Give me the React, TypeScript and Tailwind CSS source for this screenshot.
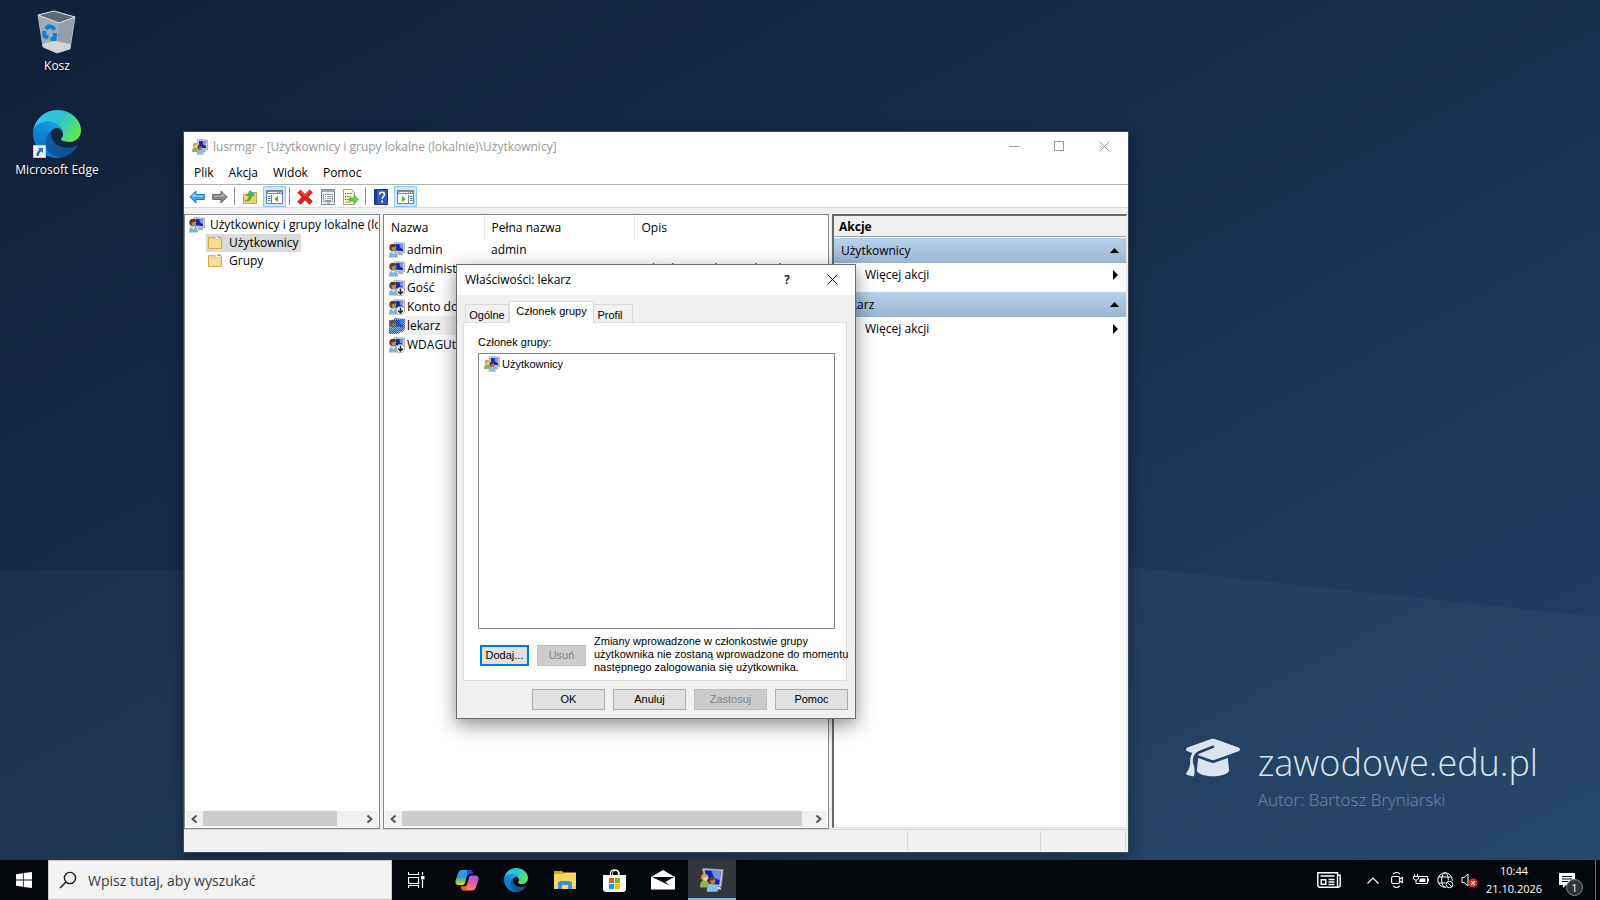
import { useState } from "react";
import type { ReactNode } from "react";
import clsx from "clsx";
import { FaGraduationCap } from "react-icons/fa6";

/* ---------- icons ---------- */

function EdgeIcon({ id, className }: { id: string; className: string }) {
  return (
    <svg viewBox="0 0 256 256" className={className} aria-hidden="true">
      <defs>
        <linearGradient id={`${id}-a`} x1="0.2" y1="0.5" x2="1" y2="0.5">
          <stop offset="0" stopColor="#0c59a4" />
          <stop offset="1" stopColor="#114a8b" />
        </linearGradient>
        <linearGradient id={`${id}-b`} x1="0.7" y1="0.1" x2="0.3" y2="1">
          <stop offset="0" stopColor="#1b9de2" />
          <stop offset="0.6" stopColor="#0a7cd6" />
          <stop offset="1" stopColor="#0078d4" />
        </linearGradient>
        <linearGradient id={`${id}-c`} x1="0" y1="0.3" x2="1" y2="0.7">
          <stop offset="0" stopColor="#35c1f1" />
          <stop offset="0.5" stopColor="#2cc4cf" />
          <stop offset="0.8" stopColor="#4fdc7c" />
          <stop offset="1" stopColor="#66eb3e" />
        </linearGradient>
      </defs>
      <g transform="translate(-4.63 -4.92)">
        <path
          fill={`url(#${id}-a)`}
          d="M235.68 195.46a93.73 93.73 0 0 1-10.54 4.71 101.87 101.87 0 0 1-35.9 6.46c-47.32 0-88.54-32.55-88.54-74.32A31.48 31.48 0 0 1 117.13 105c-42.8 1.8-53.8 46.4-53.8 72.53 0 73.88 68.09 81.37 82.76 81.37 7.91 0 19.84-2.3 27-4.56l1.31-.44a128.34 128.34 0 0 0 66.6-52.8 4 4 0 0 0-5.32-5.64Z"
        />
        <path
          fill={`url(#${id}-b)`}
          d="M110.34 246.34A79.2 79.2 0 0 1 87.6 225a80.72 80.72 0 0 1 29.53-120c3.12-1.47 8.45-4.13 15.54-4a32.35 32.35 0 0 1 25.69 13 31.88 31.88 0 0 1 6.36 18.66c0-.21 24.46-79.6-80-79.6-43.9 0-80 41.66-80 78.21a130.15 130.15 0 0 0 12.11 56 128 128 0 0 0 156.38 67.11 75.55 75.55 0 0 1-62.78-8Z"
        />
        <path
          fill={`url(#${id}-c)`}
          d="M156.94 153.78c-.81 1.05-3.3 2.5-3.3 5.66 0 2.61 1.7 5.12 4.72 7.23 14.38 10 41.49 8.68 41.56 8.68a59.56 59.56 0 0 0 30.27-8.35 61.38 61.38 0 0 0 30.43-52.87c.26-22.41-8-37.31-11.34-43.91C228.09 28.76 182.35 4.92 132.61 4.92a128 128 0 0 0-128 126.2c.48-36.54 36.8-66.05 80-66.05 3.5 0 23.46.34 42 10.07 16.34 8.58 24.9 18.94 30.85 29.21 6.18 10.67 7.28 24.15 7.28 29.52s-2.69 13.33-7.8 19.91Z"
        />
      </g>
    </svg>
  );
}

function BinIcon() {
  return (
    <svg viewBox="0 0 40 44" className="h-11 w-10" aria-hidden="true">
      <path d="M1 5 17 1l21 6-5 32-14 4-13-6z" fill="#8d96a3" />
      <path d="M1 5 22 13 20 43 6 37z" fill="#a3aab4" />
      <path d="M22 13 38 7 33 39 20 43z" fill="#959eaa" />
      <path d="M1 5 17 1l21 6-16 6z" fill="#5d6876" />
      <path d="M5.500 34 18 31l15.500 3-.5 5-13 4-14-6z" fill="#d3d4d6" />
      <path d="M1 5 17 1l21 6-16 6z" fill="none" stroke="#dfe3e7" strokeWidth="1" />
      <path d="M1 5 6 37l14 6 13-4 5-32" fill="none" stroke="#c0c5cc" strokeWidth="0.8" />
      <g fill="none" stroke="#0a80da" strokeWidth="4">
        <path d="m9 19 2.500-2.500 4.500 1 1.500 2.500" />
        <path d="m7 21 .5 5 3.500 2" />
        <path d="m18 23-.5 6h-4" />
      </g>
    </svg>
  );
}

function Monitor() {
  return (
    <>
      <path d="M5.500.5 15.500 1v10l-9.500-.8z" fill="#c9ccd0" stroke="#8f9397" strokeWidth="0.6" />
      <path d="M7 2 14 2.300v6.900L7 8.600z" fill="#1226c4" />
      <path d="M10.500 2.200 14 2.300v5L11 5.500z" fill="#7f98ea" />
      <path d="m9 10.800 4 .3 1.500 2.200H9z" fill="#a9adb2" />
    </>
  );
}

function UserIcon({ disabled = false, selected = false }: { disabled?: boolean; selected?: boolean }) {
  return (
    <svg viewBox="0 0 16 16" className="size-4 shrink-0" aria-hidden="true">
      <Monitor />
      <path d="M0 15.500c0-4 1-6 4-6s5 2 5 6z" fill="#83b3dc" />
      <path d="M3 10l1.300 2.500L6 10z" fill="#e8f1f8" />
      <circle cx="4" cy="5.500" r="3.700" fill="#5a3b20" />
      <path d="M2.600 5.200c2 .3 3.500-.5 4.200-1.200.8 2.500-.2 5.200-2.200 5.200-1.500 0-2.300-2-2-4z" fill="#bb8a58" />
      {disabled && (
        <>
          <circle cx="11.500" cy="11.500" r="4.200" fill="#fdfdfd" stroke="#8a8a8a" strokeWidth="0.700" />
          <path d="M11.500 8.500v5M9 11.500l2.500 2.500 2.500-2.500" fill="none" stroke="#222" strokeWidth="1.500" />
        </>
      )}
      {selected && (
        <>
          <defs>
            <pattern id="dither" width="2" height="2" patternUnits="userSpaceOnUse">
              <rect width="1" height="1" fill="#0078d7" />
              <rect x="1" y="1" width="1" height="1" fill="#0078d7" />
            </pattern>
          </defs>
          <path d="M0 2 5 2V.5L16 1v10l-2 2.500-5 2.500H0z" fill="url(#dither)" />
          <path d="M0 2 5 2V.5L16 1v10l-2 2.500-5 2.500H0z" fill="#0078d7" opacity="0.250" />
        </>
      )}
    </svg>
  );
}

function GroupIcon({ large = false }: { large?: boolean }) {
  return (
    <svg viewBox="0 0 16 16" className={clsx("shrink-0", large ? "size-6" : "size-4")} aria-hidden="true">
      {large ? (
        <>
          <path d="M1.500.3 15.500 1l-1.300 11.500-10-.5z" fill="#c3c6ca" stroke="#7f8388" strokeWidth="0.500" />
          <path d="M3 1.500 14 2l-1.200 9.200L5 10.500z" fill="#0d1fc0" />
          <path d="M7.500 1.700 14 2l-.7 6L9.500 7z" fill="#6f8df0" />
          <path d="m9.500 12.500 4 .2.800 1.600H10z" fill="#d6d8da" />
        </>
      ) : (
        <Monitor />
      )}
      <path d="M0 13c0-3.500 1-4.800 3-4.800s3.300 1.500 3.300 4.800z" fill="#86b25b" />
      <circle cx="3.200" cy="6.200" r="2.400" fill="#c9a04c" />
      <path d="M2.300 6.300c1.200 0 2.200-.4 2.700-.9.500 1.800-.2 3.200-1.300 3.200-.9 0-1.500-1-1.400-2.300z" fill="#efcfa0" />
      <path d="M4.500 15.800c0-3.600 1.200-5 3.600-5s3.700 1.500 3.700 5z" fill="#8dbce4" />
      <circle cx="8" cy="8.300" r="2.500" fill="#5a3b20" />
      <path d="M6.900 8.300c1.300.1 2.500-.4 3-1 .6 1.900-.2 3.700-1.400 3.700-1.100 0-1.700-1.200-1.600-2.700z" fill="#b98352" />
    </svg>
  );
}

function FolderIcon() {
  return (
    <svg viewBox="0 0 16 16" className="size-4 shrink-0" aria-hidden="true">
      <path d="M1.500 2.500h6l1 1h6v10h-13z" fill="#f3d584" stroke="#d2a94e" />
      <path d="M8.500 1.500h5v3h-5z" fill="#fff" stroke="#c9b98a" strokeWidth="0.600" />
      <path d="M10.500 2h3v1h-3z" fill="#4b9be0" />
      <path d="M2 5.500h12v7.500H2z" fill="#f8dd92" />
    </svg>
  );
}

function ArrowIcon({ back = false }: { back?: boolean }) {
  return (
    <svg viewBox="0 0 16 14" className="h-3.5 w-4" aria-hidden="true">
      {back ? (
        <path d="M.8 7 7 1v3.500h8.300v5H7V13z" fill="#38a8e8" stroke="#1871b0" strokeWidth="0.900" />
      ) : (
        <path d="M15.200 7 9 1v3.500H.7v5H9V13z" fill="#8a8a8a" stroke="#5d5d5d" strokeWidth="0.900" />
      )}
      {back ? (
        <path d="M2.500 6.500 6.200 3v2.500h8v1.200z" fill="#8fd6f8" />
      ) : (
        <path d="M13.500 6.500 9.800 3v2.500h-8v1.200z" fill="#b5b5b5" />
      )}
    </svg>
  );
}

function UpFolderIcon() {
  return (
    <svg viewBox="0 0 16 16" className="size-4" aria-hidden="true">
      <path d="M1.500 5.500h5l1.500-2h6.500v11h-13z" fill="#f1cf79" stroke="#c9a04a" />
      <path d="M10 3h4v1.500h-4z" fill="#6bb0e6" />
      <path d="M3 11.500c3 0 4-2 4-5H4.500L8.300 1.500 12 6.500H9.500c0 4-2 6-6.500 5z" fill="#4cc230" stroke="#2f9a1c" strokeWidth="0.600" />
    </svg>
  );
}

function PaneIcon({ right = false }: { right?: boolean }) {
  return (
    <svg viewBox="0 0 17 14" className="h-3.5 w-[17px]" aria-hidden="true">
      <path d="M.5.5h16v13H.5z" fill="#f7f7f7" stroke="#7b7f85" />
      <path d="M1 1h15v3H1z" fill="#8b9098" />
      <path d="M2 2h9v1H2zM12 2h1v1h-1zM14 2h1v1h-1z" fill="#f3f3f3" />
      <path d={right ? "M11.500 5v9" : "M5.500 5v9"} stroke="#7b7f85" />
      <path d={right ? "M13 6.500h2.500M13 8.500h2.500M13 10.500h2.500" : "M2 6.500h2.500M2 8.500h2.500M2 10.500h2.500"} stroke="#4a78b5" />
      <path d={right ? "M5 6v6l3.500-3z" : "M12 6v6L8.500 9z"} fill="#42b02c" />
    </svg>
  );
}

function DeleteIcon() {
  return (
    <svg viewBox="0 0 16 16" className="size-4" aria-hidden="true">
      <path d="M3.500 1 8 5.300 12.500 1l2.800 2.300L11 8l4.500 4.500-3 2.700L8 10.800l-4.300 4.400-3-2.500L5 8 .8 3.600z" fill="#e02020" stroke="#b01010" strokeWidth="0.700" />
      <path d="M3.500 2 8 6.500 12.500 2" fill="none" stroke="#f57a70" strokeWidth="0.900" />
    </svg>
  );
}

function PropertiesIcon() {
  return (
    <svg viewBox="0 0 16 16" className="size-4" aria-hidden="true">
      <path d="M1.500.5h13v15h-13z" fill="#eef0f2" stroke="#83878d" />
      <path d="M2 1h12v2H2z" fill="#a4a8ae" />
      <path d="M3.500 5.500h9v7h-9z" fill="#fff" stroke="#9ba0a6" />
      <path d="M5 7.500h1M5 9.500h1" stroke="#2f6fb5" />
      <path d="M7 7.500h4M7 9.500h4M5 11.500h6" stroke="#8d97a3" />
      <path d="M7 14h3" stroke="#28b6e8" />
    </svg>
  );
}

function ExportIcon() {
  return (
    <svg viewBox="0 0 17 16" className="h-4 w-[17px]" aria-hidden="true">
      <path d="M1.500.5h8l3 3v12h-11z" fill="#fcf8d8" stroke="#a79f76" />
      <path d="M3 4.500h1M3 7.500h1M3 10.500h1" stroke="#444" />
      <path d="M5 4.500h5M5 7.500h4M5 10.500h3M4 13h5" stroke="#8d8d8d" />
      <path d="M7.500 9H12V6l4.500 4.500L12 15v-3H7.500z" fill="#6fd04b" stroke="#35a01f" strokeWidth="0.700" />
    </svg>
  );
}

function HelpIcon() {
  return (
    <svg viewBox="0 0 14 16" className="h-4 w-3.5" aria-hidden="true">
      <path d="M.5.5h13v15H.5z" fill="#3557c4" stroke="#1d3184" />
      <path d="M.5.5H3v15H.5z" fill="#22389a" />
      <path d="M5.500 5.500c0-3 5-3 5 0 0 2-2.300 2-2.300 4.300M8.200 11.500v2" fill="none" stroke="#fff" strokeWidth="1.600" />
    </svg>
  );
}

function Chevron({ right = false }: { right?: boolean }) {
  return (
    <svg viewBox="0 0 8 8" className="size-2" aria-hidden="true">
      <path d={right ? "M1.500.5 5.500 4l-4 3.500" : "M6.500.5 2.500 4l4 3.500"} fill="none" stroke="#505050" strokeWidth="1.900" />
    </svg>
  );
}

function CloseIcon({ color }: { color: string }) {
  return (
    <svg viewBox="0 0 11 11" className="size-[11px]" aria-hidden="true">
      <path d="m.5.5 10 10m0-10-10 10" stroke={color} fill="none" />
    </svg>
  );
}

/* ---------- desktop ---------- */

function DesktopIcon({ label, children }: { label: string; children: ReactNode }) {
  return (
    <button type="button" className="flex w-[114px] flex-col items-center gap-1">
      <span className="relative flex h-12 items-end justify-center">{children}</span>
      <span className="text-xs leading-4 text-white [text-shadow:1px_1px_2px_#000]">{label}</span>
    </button>
  );
}

function Wallpaper() {
  return (
    <svg className="absolute inset-0 size-full" viewBox="0 0 1600 860" preserveAspectRatio="none" aria-hidden="true">
      <defs>
        <linearGradient id="sky" x1="0" y1="0" x2="1" y2="1">
          <stop offset="0" stopColor="#112039" />
          <stop offset="0.500" stopColor="#182f4c" />
          <stop offset="1" stopColor="#224468" />
        </linearGradient>
      </defs>
      <path d="M0 0h1600v860H0z" fill="url(#sky)" />
      <path d="M0 570h183l947-3 470 50v243H0z" fill="#fff" opacity="0.030" />
    </svg>
  );
}

function Watermark() {
  return (
    <div className="absolute right-[61px] bottom-12 flex items-start gap-[18px] text-[#dbe5f0]">
      <FaGraduationCap className="h-[43px] w-[54px]" />
      <div className="pr-px font-light">
        <p className="pt-0.5 text-4xl leading-[50px]">zawodowe.edu.pl</p>
        <p className="text-[17px] leading-6 text-[#6f8cab]">Autor: Bartosz Bryniarski</p>
      </div>
    </div>
  );
}

/* ---------- lusrmgr window ---------- */

const users = [
  { name: "admin", full: "admin", desc: "" },
  { name: "Administrator", full: "", desc: "Wbudowane konto do administrow..." },
  { name: "Gość", full: "", desc: "", disabled: true },
  { name: "Konto domyślne", full: "", desc: "", disabled: true },
  { name: "lekarz", full: "lekarz", desc: "", selected: true },
  { name: "WDAGUtilityAccount", full: "", desc: "", disabled: true },
];

function ToolButton({ label, active = false, children }: { label: string; active?: boolean; children: ReactNode }) {
  return (
    <button
      type="button"
      aria-label={label}
      className={clsx(
        "flex h-[21px] w-[23px] items-center justify-center border",
        active ? "ml-0.5 border-[#90c8f6] bg-[#cce8ff]" : "border-transparent",
      )}
    >
      {children}
    </button>
  );
}

function ToolDivider() {
  return <span className="mx-[3px] h-[18px] w-px self-center bg-[#8d8d8d]" />;
}

function HScroll({ thumb }: { thumb: string }) {
  return (
    <div className="mx-px mb-px flex h-4 bg-[#f0f0f0]">
      <button type="button" aria-label="Przewiń w lewo" className="flex w-4 items-center justify-center">
        <Chevron />
      </button>
      <div className="ml-px flex-1">
        <div className={clsx("h-[15px] bg-[#cdcdcd]", thumb)} />
      </div>
      <button type="button" aria-label="Przewiń w prawo" className="flex w-[17px] items-center justify-center">
        <Chevron right />
      </button>
    </div>
  );
}

function ActionGroup({ title }: { title: string }) {
  return (
    <section className="mb-[5px]">
      <button
        type="button"
        className="flex h-[25px] w-full items-center justify-between bg-linear-to-b from-[#b9d1ea] to-[#99b4d1] pr-[7px] pl-[7px]"
      >
        {title}
        <svg viewBox="0 0 9 5" className="h-[5px] w-[9px]" aria-hidden="true">
          <path d="M0 5 4.500 0 9 5z" />
        </svg>
      </button>
      <button type="button" className="flex h-6 w-full items-center justify-between pr-2 pl-[31px]">
        Więcej akcji
        <svg viewBox="0 0 5 10" className="h-2.5 w-[5px]" aria-hidden="true">
          <path d="M0 0 5 5 0 10z" />
        </svg>
      </button>
    </section>
  );
}

function ManagerWindow() {
  return (
    <section className="absolute top-[131px] left-[183px] flex h-[722px] w-[946px] flex-col border border-[#3b4755] bg-[#f0f0f0] text-xs text-black shadow-[0_4px_14px_rgba(0,0,0,0.4)]">
      <header className="flex h-[30px] items-center bg-white pr-px pl-2 text-[#999]">
        <GroupIcon />
        <h1 className="ml-[5px] flex-1">lusrmgr - [Użytkownicy i grupy lokalne (lokalnie)\Użytkownicy]</h1>
        <button type="button" aria-label="Minimalizuj" className="flex h-full w-[46px] items-center justify-center pb-0.5">
          <span className="h-px w-2.5 bg-[#999]" />
        </button>
        <button type="button" aria-label="Maksymalizuj" className="flex h-full w-11 items-center justify-center pb-0.5">
          <span className="size-2.5 border border-[#999]" />
        </button>
        <button type="button" aria-label="Zamknij" className="flex h-full w-[46px] items-center justify-center pb-0.5">
          <CloseIcon color="#999" />
        </button>
      </header>

      <nav className="flex h-[23px] items-center gap-[15px] border-b border-[#b0b4b9] bg-white pl-2.5">
        <button type="button">Plik</button>
        <button type="button">Akcja</button>
        <button type="button">Widok</button>
        <button type="button">Pomoc</button>
      </nav>

      <div className="flex h-[23px] items-end border-b border-[#d9d9d9] bg-white pl-px">
        <ToolButton label="Wstecz"><ArrowIcon back /></ToolButton>
        <ToolButton label="Dalej"><ArrowIcon /></ToolButton>
        <ToolDivider />
        <ToolButton label="W górę"><UpFolderIcon /></ToolButton>
        <ToolButton label="Pokaż drzewo konsoli" active><PaneIcon /></ToolButton>
        <ToolDivider />
        <ToolButton label="Usuń"><DeleteIcon /></ToolButton>
        <ToolButton label="Właściwości"><PropertiesIcon /></ToolButton>
        <ToolButton label="Eksportuj listę"><ExportIcon /></ToolButton>
        <ToolDivider />
        <ToolButton label="Pomoc"><HelpIcon /></ToolButton>
        <ToolButton label="Pokaż okienko akcji" active><PaneIcon right /></ToolButton>
      </div>

      <div className="flex min-h-0 flex-1 gap-[3px] pt-1.5 pr-px">
        <div className="flex w-[196px] flex-col border border-[#828790] bg-white">
          <div className="min-h-0 flex-1 overflow-hidden pt-px pr-px pl-1 leading-[18px] whitespace-nowrap">
            <div className="flex items-center gap-[5px] overflow-hidden">
              <UserIcon />
              Użytkownicy i grupy lokalne (lokalnie)
            </div>
            <div className="ml-[17px] flex">
              <span className="flex items-center gap-1.5 bg-[#d9d9d9] pr-0.5 pl-px">
                <FolderIcon />
                Użytkownicy
              </span>
            </div>
            <div className="ml-[17px] flex items-center gap-1.5 pl-px">
              <FolderIcon />
              Grupy
            </div>
          </div>
          <HScroll thumb="w-[85%]" />
        </div>

        <div className="flex w-[446px] flex-col border border-[#828790] bg-white">
          <div className="min-h-0 flex-1 overflow-hidden">
            <table className="w-full table-fixed text-left">
              <thead>
                <tr className="h-[25px]">
                  <th className="w-[100px] border-r border-[#e5e5e5] pl-[7px] font-normal">Nazwa</th>
                  <th className="w-[150px] border-r border-[#e5e5e5] pl-[7px] font-normal">Pełna nazwa</th>
                  <th className="pl-[7px] font-normal">Opis</th>
                </tr>
              </thead>
              <tbody>
                {users.map((u) => (
                  <tr key={u.name} className="h-[19px] leading-[19px]">
                    <td className="pl-[5px]">
                      <div className="flex items-center overflow-hidden whitespace-nowrap">
                        <UserIcon disabled={u.disabled} selected={u.selected} />
                        <span className={clsx("flex-1 pl-0.5", u.selected && "bg-[#f0f0f0]")}>{u.name}</span>
                      </div>
                    </td>
                    <td className="pl-[7px]">{u.full}</td>
                    <td className="truncate pl-[7px]">{u.desc}</td>
                  </tr>
                ))}
              </tbody>
            </table>
          </div>
          <HScroll thumb="w-[98%]" />
        </div>

        <aside className="mb-px flex-1 border-t-2 border-r border-b border-l-2 border-t-[#696969] border-r-[#e3e3e3] border-b-[#e3e3e3] border-l-[#696969] bg-white">
          <h2 className="mb-px flex h-[21px] items-center border-b border-[#a0a0a0] bg-[#f0f0f0] pt-0.5 pl-[5px] font-bold">
            Akcje
          </h2>
          <ActionGroup title="Użytkownicy" />
          <ActionGroup title="lekarz" />
        </aside>
      </div>

      <footer className="flex h-[23px] border-t border-[#d7d7d7] py-px pr-0.5">
        <span className="flex-1 border-r border-[#d7d7d7]" />
        <span className="w-[133px] border-r border-[#d7d7d7]" />
        <span className="w-[85px] border-r border-[#d7d7d7]" />
      </footer>
    </section>
  );
}

/* ---------- properties dialog ---------- */

function DialogButton({ disabled = false, children }: { disabled?: boolean; children: ReactNode }) {
  return (
    <button
      type="button"
      disabled={disabled}
      className={clsx(
        "h-[21px] w-[73px] border",
        disabled ? "border-[#bfbfbf] bg-[#cccccc] text-[#838383]" : "border-[#adadad] bg-[#e1e1e1]",
      )}
    >
      {children}
    </button>
  );
}

const tabs = ["Ogólne", "Członek grupy", "Profil"];
const tabWidths = ["w-11", "w-[85px]", "w-[39px]"];

function PropertiesDialog() {
  const [tab, setTab] = useState(1);

  return (
    <section
      role="dialog"
      aria-labelledby="dlg-title"
      className="absolute top-[264px] left-[456px] w-[400px] border border-[#6b6b6b] bg-[#f0f0f0] pb-2 font-['Liberation_Sans',Arial,sans-serif] text-[11px] text-black shadow-[0_6px_18px_rgba(0,0,0,0.45)]"
    >
      <header className="flex h-[30px] items-center bg-white pl-2 font-['Open_Sans',sans-serif] text-xs">
        <h2 id="dlg-title" className="flex-1">Właściwości: lekarz</h2>
        <button type="button" aria-label="Pomoc" className="w-[46px] font-semibold">?</button>
        <button type="button" aria-label="Zamknij" className="flex h-full w-[45px] items-center justify-center pb-0.5">
          <CloseIcon color="#000" />
        </button>
      </header>

      <div className="px-1.5 pt-1.5">
        <div role="tablist" className="flex items-end pl-0.5">
          {tabs.map((t, i) => (
            <button
              key={t}
              type="button"
              role="tab"
              aria-selected={i === tab}
              onClick={() => setTab(i)}
              className={clsx(
                "border border-b-0 border-[#d9d9d9] text-center",
                tabWidths[i],
                i === tab ? "z-10 -mb-px h-[22px] bg-white pb-0.5" : "h-[18px] pt-0.5",
                i === 2 && "border-l-0 pr-1.5",
              )}
            >
              {t}
            </button>
          ))}
        </div>

        <div role="tabpanel" className="mr-0.5 border border-[#dcdcdc] bg-white pt-[11px] pr-[13px] pb-1.5 pl-3.5">
          <p id="member-label" className="leading-4">Członek grupy:</p>
          <ul aria-labelledby="member-label" className="mt-[3px] -mr-0.5 h-[276px] border border-[#828790] pt-0.5 pl-[5px]">
            <li className="flex items-center gap-0.5 leading-[14px]">
              <GroupIcon />
              Użytkownicy
            </li>
          </ul>
          <div className="mt-1.5 -mr-3 flex items-center gap-2 pl-0.5">
            <button type="button" className="mt-0.5 h-[21px] w-[49px] shrink-0 border-2 border-[#0078d7] bg-[#e1e1e1]">
              Dodaj...
            </button>
            <button
              type="button"
              disabled
              className="mt-0.5 h-[21px] w-[49px] shrink-0 border border-[#bfbfbf] bg-[#cccccc] text-[#838383]"
            >
              Usuń
            </button>
            <p className="leading-[13px] whitespace-nowrap">
              Zmiany wprowadzone w członkostwie grupy
              <br />
              użytkownika nie zostaną wprowadzone do momentu
              <br />
              następnego zalogowania się użytkownika.
            </p>
          </div>
        </div>

        <div className="mt-2 flex justify-end gap-2 pr-px">
          <DialogButton>OK</DialogButton>
          <DialogButton>Anuluj</DialogButton>
          <DialogButton disabled>Zastosuj</DialogButton>
          <DialogButton>Pomoc</DialogButton>
        </div>
      </div>
    </section>
  );
}

/* ---------- taskbar ---------- */

function TaskButton({ label, active = false, children }: { label: string; active?: boolean; children: ReactNode }) {
  return (
    <button
      type="button"
      aria-label={label}
      className={clsx(
        "flex h-10 w-12 items-center justify-center",
        active && "border-b-2 border-[#76b9ed] bg-[#33373d] pt-0.5",
      )}
    >
      {children}
    </button>
  );
}

function CopilotIcon() {
  return (
    <svg viewBox="0 0 24 22" className="h-[22px] w-6" aria-hidden="true">
      <defs>
        <linearGradient id="cp-a" x1="0" y1="0" x2="0" y2="1">
          <stop offset="0" stopColor="#2aa5f0" />
          <stop offset="0.450" stopColor="#2b8fd8" />
          <stop offset="0.700" stopColor="#6cc26a" />
          <stop offset="1" stopColor="#f4d81c" />
        </linearGradient>
        <linearGradient id="cp-b" x1="0.700" y1="0" x2="0.300" y2="1">
          <stop offset="0" stopColor="#a35cf0" />
          <stop offset="0.500" stopColor="#ec5c9c" />
          <stop offset="1" stopColor="#ff9a4d" />
        </linearGradient>
      </defs>
      <path d="M8 1h7c2 0 2.600 1.500 3 4h-3c-2 0-2.800 1-3.300 2.800L10 14c-.5 1.600-1.200 2-3 2H4c-3 0-4-2-3.300-5L3 4.500C3.700 2 5.200 1 8 1z" fill="url(#cp-a)" />
      <path d="M12 1h3c2 0 2.600 1.500 3 4h-3c-1.400 0-2.200.5-2.800 1.500z" fill="#1b48c8" />
      <path d="M16 21.500H9c-2 0-2.600-1.500-3-4h3c2 0 2.800-1 3.300-2.800L14 8.500c.5-1.600 1.200-2 3-2h3c3 0 4 2 3.300 5L21 18c-.7 2.500-2.200 3.500-5 3.500z" fill="url(#cp-b)" />
      <path d="M6 17.500h3c1.400 0 2.200-.5 2.800-1.500L11 21.500H9c-2 0-2.600-1.500-3-4z" fill="#f2543d" />
    </svg>
  );
}

function Taskbar() {
  return (
    <footer className="relative flex h-10 items-center bg-[#04080d] text-white">
      <button type="button" aria-label="Start" className="flex h-10 w-12 items-center justify-center">
        <svg viewBox="0 0 16 16" className="size-4" fill="#fff" aria-hidden="true">
          <path d="M0 2.200 6.900 1.200v6.400H0zM7.700 1.100 16 0v7.600H7.700zM0 8.400h6.900v6.400L0 13.800zM7.700 8.400H16V16l-8.300-1.100z" />
        </svg>
      </button>
      <label className="flex h-10 w-[344px] items-center border border-[#c9c9c9] bg-[#f2f2f2] pl-2.5">
        <svg viewBox="0 0 18 18" className="size-[18px]" fill="none" stroke="#1b1b1b" strokeWidth="1.400" aria-hidden="true">
          <circle cx="11" cy="7" r="5.600" />
          <path d="M7 11 1 17" />
        </svg>
        <input
          type="text"
          aria-label="Wyszukaj"
          placeholder="Wpisz tutaj, aby wyszukać"
          className="ml-[11px] flex-1 bg-transparent pt-0.5 text-sm outline-none placeholder:text-[#3a3a3a]"
        />
      </label>

      <TaskButton label="Widok zadań">
        <svg viewBox="0 0 17 16" className="h-4 w-[17px]" fill="none" stroke="#fff" aria-hidden="true">
          <path d="M.5 0v2.500h10V0M.5 16v-2.500h10V16M.5 5.500h10v6H.5zM14.500 0v3M14.500 8v8" strokeWidth="1.200" />
          <path d="M13 4h3.500v3.500H13z" fill="#fff" stroke="none" />
        </svg>
      </TaskButton>
      <div className="ml-[3px] flex gap-px">
        <TaskButton label="Copilot"><CopilotIcon /></TaskButton>
        <TaskButton label="Microsoft Edge"><EdgeIcon id="edge-task" className="size-6" /></TaskButton>
        <TaskButton label="Eksplorator plików">
          <svg viewBox="0 0 22 18" className="h-[18px] w-[22px]" aria-hidden="true">
            <path d="M0 0h8l2 2h12v16H0z" fill="#e0a416" />
            <path d="M0 3h9l1-1.500h12V18H0z" fill="#fcd768" />
            <path d="M4 18v-6.500L6 10h10l2 1.500V18h-4v-4H8v4z" fill="#3d8fd6" />
          </svg>
        </TaskButton>
        <TaskButton label="Microsoft Store">
          <svg viewBox="0 0 23 23" className="size-[23px]" aria-hidden="true">
            <path d="M7.500 6V4c0-4 8-4 8 0v2" fill="none" stroke="#fff" strokeWidth="1.300" />
            <path d="M9.500 6V4.500c0-4 7-4 7 0V6" fill="none" stroke="#fff" strokeWidth="0.800" />
            <path d="M0 6h23v15l-2 2H2l-2-2z" fill="#fff" />
            <path d="M6 9h5v5H6z" fill="#f25022" />
            <path d="M12 9h5v5h-5z" fill="#7fba00" />
            <path d="M6 15h5v5H6z" fill="#00a4ef" />
            <path d="M12 15h5v5h-5z" fill="#ffb900" />
          </svg>
        </TaskButton>
        <TaskButton label="Poczta">
          <svg viewBox="0 0 24 20" className="h-5 w-6" aria-hidden="true">
            <path d="M0 7 12 0l12 7v12.500H0z" fill="#fff" />
            <path d="M1 7h22l-8.500 5 4 3.500z" fill="#04080d" />
          </svg>
        </TaskButton>
        <TaskButton label="lusrmgr" active><GroupIcon large /></TaskButton>
      </div>

      <div className="ml-auto flex h-full items-center">
        <button type="button" aria-label="Wiadomości" className="mr-5">
          <svg viewBox="0 0 24 16" className="h-4 w-6" fill="none" stroke="#fff" strokeWidth="1.400" aria-hidden="true">
            <path d="M20.500 15.200H3c-1.600 0-2.200-.8-2.200-2V.8h19.700zM20.500 3.200h2.700v10c0 1.400-1 2-2.700 2" />
            <path d="M3.500 4h14M11.500 7.500h6M11.500 10h6M11.500 12.500h6M4.200 7.700h4.600v4.600H4.200z" />
          </svg>
        </button>
        <button type="button" aria-label="Pokaż ukryte ikony" className="flex w-6 justify-center">
          <svg viewBox="0 0 12 7" className="h-[7px] w-3" fill="none" stroke="#fff" strokeWidth="1.200" aria-hidden="true">
            <path d="M.5 6.500 6 1l5.500 5.500" />
          </svg>
        </button>
        <button type="button" aria-label="Kamera" className="flex w-6 justify-center">
          <svg viewBox="0 0 12 16" className="h-4 w-3" fill="none" stroke="#fff" strokeWidth="1.100" aria-hidden="true">
            <rect x="0.600" y="4.500" width="8" height="7" rx="1.500" />
            <path d="m8.600 7 2.800-1.500v5L8.600 9M2 2C4 .3 7 .3 9 2M2 14c2 1.700 5 1.700 7 0" />
          </svg>
        </button>
        <button type="button" aria-label="Bateria" className="flex w-6 justify-center">
          <svg viewBox="0 0 16 12" className="h-3 w-4" fill="none" stroke="#fff" aria-hidden="true">
            <path d="M6 2.500h8.500v7H5.500" />
            <path d="M7 4.500h5.500v3.500H6z" fill="#fff" stroke="none" />
            <path d="M15.500 4.500v3M1.500 0v2.500M4.500 0v2.500M.5 2.500h5V5L3.800 6H2.200L.5 5zM3 6v3.500h3" />
          </svg>
        </button>
        <button type="button" aria-label="Sieć" className="flex w-6 justify-center">
          <svg viewBox="0 0 17 17" className="size-[17px]" fill="none" stroke="#fff" aria-hidden="true">
            <circle cx="8" cy="8" r="7.200" />
            <ellipse cx="8" cy="8" rx="3.300" ry="7.200" />
            <path d="M1.500 5h13M1.500 11h8" />
            <circle cx="12.500" cy="12.500" r="4.500" fill="#04080d" stroke="none" />
            <circle cx="12.500" cy="12.500" r="3.300" />
            <path d="m10.200 10.200 4.600 4.600" />
          </svg>
        </button>
        <button type="button" aria-label="Dźwięk" className="flex w-6 justify-center">
          <svg viewBox="0 0 17 16" className="h-4 w-[17px]" fill="none" aria-hidden="true">
            <path d="M1 5.500h2L7 2v12l-4-3.500H1z" stroke="#fff" />
            <circle cx="12" cy="11" r="4.500" fill="#e0242e" />
            <path d="m10.200 9.200 3.600 3.600m0-3.600-3.600 3.600" stroke="#fff" strokeWidth="1.200" />
          </svg>
        </button>
        <button type="button" className="w-[66px] text-center text-[11px] leading-[18px]">
          10:44
          <br />
          21.10.2026
        </button>
        <button type="button" aria-label="Powiadomienia" className="relative flex h-full w-12 items-center pl-3">
          <svg viewBox="0 0 16 15" className="h-[15px] w-4" aria-hidden="true">
            <path d="M0 0h16v12H7l-3 3v-3H0z" fill="#fff" />
            <path d="M3 3.500h10M3 6h10M3 8.500h6" stroke="#04080d" />
          </svg>
          <span className="absolute right-3 bottom-1 flex size-[17px] items-center justify-center rounded-full border border-[#8a8a8a] bg-[#303236] text-[11px] leading-none">
            1
          </span>
        </button>
        <span className="h-full w-[5px] border-l border-[#6c7075]" />
      </div>
    </footer>
  );
}

export default function App() {
  return (
    <div className="flex min-h-screen flex-col overflow-hidden bg-[#182f4c] font-['Open_Sans',sans-serif]">
      <main className="relative flex-1">
        <Wallpaper />
        <div className="relative flex flex-col items-start gap-9 pt-1.5">
          <DesktopIcon label="Kosz">
            <BinIcon />
          </DesktopIcon>
          <DesktopIcon label="Microsoft Edge">
            <EdgeIcon id="edge-desk" className="size-12" />
            <svg viewBox="0 0 13 13" className="absolute bottom-0 left-0 size-[13px]" aria-hidden="true">
              <path d="M.5.5h12v12H.5z" fill="#f4f4f4" stroke="#c8c8c8" />
              <path d="M5 3h5v5L8.300 6.300C6.500 7.500 6 9 6 11H3.500C3.200 8 4.500 6 6.500 4.700z" fill="#2b6cc0" />
            </svg>
          </DesktopIcon>
        </div>
        <Watermark />
        <ManagerWindow />
        <PropertiesDialog />
      </main>
      <Taskbar />
    </div>
  );
}
